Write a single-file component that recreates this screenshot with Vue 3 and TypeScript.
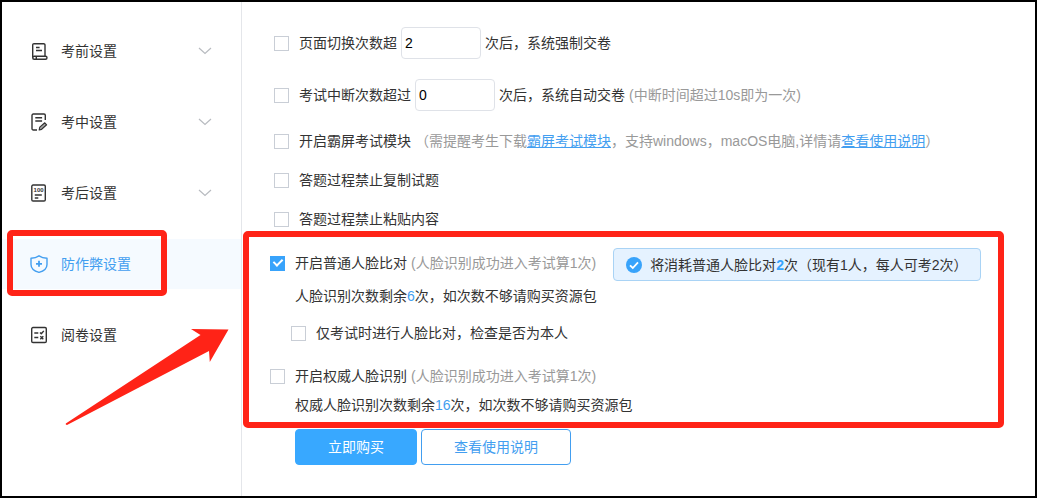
<script setup lang="ts">
import { ref } from 'vue'

interface NavItem {
  key: string
  label: string
  expandable: boolean
}

const navItems: NavItem[] = [
  { key: 'before', label: '考前设置', expandable: true },
  { key: 'during', label: '考中设置', expandable: true },
  { key: 'after', label: '考后设置', expandable: true },
  { key: 'cheat', label: '防作弊设置', expandable: false },
  { key: 'review', label: '阅卷设置', expandable: false },
]

const active = ref('cheat')

const limitSwitch = ref(false)
const switchCount = ref('2')
const limitBreak = ref(false)
const breakCount = ref('0')
const lockScreen = ref(false)
const noCopy = ref(false)
const noPaste = ref(false)
const faceCompare = ref(true)
const onlyInExam = ref(false)
const faceAuthority = ref(false)
</script>

<template>
  <div class="frame" lang="zh-CN">
    <aside class="sidebar">
      <nav class="nav">
        <button
          v-for="item in navItems"
          :key="item.key"
          type="button"
          class="nav-item"
          :class="{ active: item.key === active }"
          @click="active = item.key"
        >
          <svg v-if="item.key === 'before'" class="nav-icon" viewBox="0 0 18 18" aria-hidden="true">
            <path d="M2.700 15.500V3a1.300 1.300 0 0 1 1.300-1.300h9.700A1.300 1.300 0 0 1 15 3v11" />
            <rect x="2.700" y="14.300" width="14.300" height="3" rx="1.500" />
            <path d="M6.300 14.300v3M6 5.500h3.600M6 8.500h6" />
          </svg>
          <svg v-else-if="item.key === 'during'" class="nav-icon" viewBox="0 0 18 18" aria-hidden="true">
            <path d="M15.300 7V2.300A1.300 1.300 0 0 0 14 1H3.300A1.300 1.300 0 0 0 2 2.300v13.400A1.300 1.300 0 0 0 3.300 17H7" />
            <path d="M5.300 4.800h6.800M5.300 8h6.800" />
            <path class="thin" d="M9.200 17l.6-2.900 5-4.300 1.800 2-5 4.500z" />
          </svg>
          <svg v-else-if="item.key === 'after'" class="nav-icon" viewBox="0 0 18 18" aria-hidden="true">
            <rect x="1.800" y="1" width="13.500" height="16" rx="1.300" />
            <text x="8.600" y="8">100</text>
            <path d="M4.800 11h7M4.800 14h3.500" />
          </svg>
          <svg v-else-if="item.key === 'cheat'" class="nav-icon" viewBox="0 0 18 18" aria-hidden="true">
            <path d="M9 .8c2.400 1.600 5 2.300 8 2.400v6.200c0 3.800-3.300 6.600-8 7.900-4.700-1.300-8-4.100-8-7.900V3.200C4 3.100 6.600 2.400 9 .8z" />
            <path class="bold" d="M9 5.800v6M6 8.800h6" />
          </svg>
          <svg v-else class="nav-icon" viewBox="0 0 18 18" aria-hidden="true">
            <rect x="1.700" y="1.500" width="14.600" height="15" rx="1.300" />
            <path d="M4.300 7h4M4.300 11.500h4M10 6.400l1.300 1.400 2.500-2.900M10.300 10.200l3 3M13.300 10.200l-3 3" />
          </svg>
          <span class="nav-label">{{ item.label }}</span>
          <svg v-if="item.expandable" class="chevron" viewBox="0 0 14 8" aria-hidden="true">
            <path d="M1 1l6 5.500L13 1" />
          </svg>
          <span v-if="item.key === 'cheat'" class="nav-mark"></span>
        </button>
      </nav>
      <svg class="arrow" viewBox="0 0 164 98" aria-hidden="true">
        <path d="M163.500 1.500L126 1l9.500 6L.8 95.500v1L2 97 144 23l.8 11z" />
      </svg>
    </aside>

    <main class="content">
      <div class="limits">
        <div class="row">
          <input id="limit-switch" v-model="limitSwitch" class="check" type="checkbox" />
          <div class="inline">
            <label for="limit-switch">页面切换次数超</label>
            <input v-model="switchCount" class="number" type="text" aria-label="页面切换次数" />
            <span>次后，系统强制交卷</span>
          </div>
        </div>
        <div class="row">
          <input id="limit-break" v-model="limitBreak" class="check" type="checkbox" />
          <div class="inline">
            <label for="limit-break">考试中断次数超过</label>
            <input v-model="breakCount" class="number" type="text" aria-label="考试中断次数" />
            <span>次后，系统自动交卷</span>
            <span class="hint">(中断时间超过10s即为一次)</span>
          </div>
        </div>
      </div>

      <div class="toggles">
        <div class="row">
          <input id="lock-screen" v-model="lockScreen" class="check" type="checkbox" />
          <div class="inline">
            <label for="lock-screen">开启霸屏考试模块</label>
            <span class="hint">（需提醒考生下载<a href="#download">霸屏考试模块</a>，支持windows，macOS电脑,详情请<a href="#guide">查看使用说明</a>）</span>
          </div>
        </div>
        <div class="row">
          <input id="no-copy" v-model="noCopy" class="check" type="checkbox" />
          <label for="no-copy">答题过程禁止复制试题</label>
        </div>
        <div class="row">
          <input id="no-paste" v-model="noPaste" class="check" type="checkbox" />
          <label for="no-paste">答题过程禁止粘贴内容</label>
        </div>
      </div>

      <section class="face">
        <div class="face-head">
          <div class="row tall">
            <input id="face-compare" v-model="faceCompare" class="check" type="checkbox" />
            <div class="inline">
              <label for="face-compare">开启普通人脸比对</label>
              <span class="hint">(人脸识别成功进入考试算1次)</span>
            </div>
          </div>
          <div class="tip">
            <svg class="tip-icon" viewBox="0 0 16 16" aria-hidden="true">
              <circle cx="8" cy="8" r="8" />
              <path d="M4 8.300l2.800 2.700L12 5.400" />
            </svg>
            <span>将消耗普通人脸比对<b>2</b>次（现有1人，每人可考2次）</span>
          </div>
        </div>
        <p class="remain">人脸识别次数剩余<em>6</em>次，如次数不够请购买资源包</p>
        <div class="row nested">
          <input id="only-exam" v-model="onlyInExam" class="check" type="checkbox" />
          <label for="only-exam">仅考试时进行人脸比对，检查是否为本人</label>
        </div>
        <div class="row authority">
          <input id="face-authority" v-model="faceAuthority" class="check" type="checkbox" />
          <div class="inline">
            <label for="face-authority">开启权威人脸识别</label>
            <span class="hint">(人脸识别成功进入考试算1次)</span>
          </div>
        </div>
        <p class="remain last">权威人脸识别次数剩余<em>16</em>次，如次数不够请购买资源包</p>
      </section>

      <div class="actions">
        <button type="button" class="btn primary">立即购买</button>
        <button type="button" class="btn outline">查看使用说明</button>
      </div>
    </main>
  </div>
</template>

<style>
body {
  margin: 0;
}
</style>

<style scoped>
.frame {
  display: flex;
  box-sizing: border-box;
  min-height: 100vh;
  border: 2px solid #000;
  background: #fff;
  color: #333;
  font: 14px/20px "Liberation Sans", "Noto Sans CJK SC", sans-serif;
}

.frame button,
.frame input {
  font: inherit;
  color: inherit;
}

.sidebar {
  position: relative;
  flex: 0 0 240px;
  box-sizing: border-box;
  border-right: 1px solid #e4e6ea;
}

.nav {
  display: flex;
  flex-direction: column;
  gap: 21px;
  padding-top: 24px;
}

.nav-item {
  position: relative;
  display: flex;
  align-items: center;
  gap: 13px;
  height: 50px;
  padding: 0 29px 0 28px;
  border: 0;
  background: none;
  text-align: left;
  cursor: pointer;
}

.frame .nav-item.active {
  background: #f5faff;
  color: #429ef0;
}

.nav-icon {
  width: 18px;
  height: 18px;
  fill: none;
  stroke: currentColor;
  stroke-width: 1.4;
  stroke-linejoin: round;
}

.nav-icon text {
  fill: currentColor;
  stroke: none;
  font: bold 6px "Liberation Sans", sans-serif;
  text-anchor: middle;
}

.nav-icon .thin {
  stroke-width: 1.2;
  fill: #aaa;
}

.nav-icon .bold {
  stroke-width: 1.8;
}

.nav-label {
  flex: 1;
}

.chevron {
  width: 14px;
  height: 8px;
  fill: none;
  stroke: #b8bbc0;
  stroke-width: 1.2;
}

.nav-mark {
  position: absolute;
  top: -9px;
  bottom: -7px;
  left: 5px;
  width: 148px;
  border: 6px solid #ff2317;
  border-radius: 5px;
}

.arrow {
  position: absolute;
  top: 326px;
  left: 63px;
  width: 164px;
  height: 98px;
  fill: #ff2317;
}

.content {
  flex: 1;
  min-width: 0;
  padding: 25px 31px 0 1px;
}

.limits,
.toggles {
  display: flex;
  flex-direction: column;
  padding-left: 31px;
}

.limits {
  gap: 20px;
}

.toggles {
  gap: 19px;
  margin-top: 20px;
}

.row {
  display: flex;
  align-items: center;
  gap: 10px;
}

.inline {
  display: flex;
  align-items: center;
  gap: 4px;
}

.check {
  flex: none;
  appearance: none;
  box-sizing: border-box;
  width: 15px;
  height: 15px;
  margin: 0;
  border: 1px solid #c9ced6;
  background: #fff;
}

.check:checked {
  display: grid;
  place-items: center;
  border-color: #38a3fb;
  background: #38a3fb;
}

.check:checked::after {
  content: "";
  width: 4px;
  height: 7px;
  margin-bottom: 3px;
  border: solid #fff;
  border-width: 0 2px 2px 0;
  transform: rotate(45deg);
}

.frame .number {
  box-sizing: border-box;
  width: 80px;
  height: 32px;
  padding: 0 3px;
  border: 1px solid #dfe2e8;
  border-radius: 4px;
  background: #fff;
  color: #000;
}

.hint {
  color: #999;
}

.hint a {
  color: #429ef0;
  text-decoration: underline;
}

.face {
  margin-top: 2px;
  padding: 11px 17px 7px 21px;
  border: 6px solid #ff2317;
  border-radius: 5px;
}

.face-head {
  display: flex;
  align-items: flex-start;
  gap: 17px;
}

.tall {
  flex: none;
  height: 30px;
}

.tip {
  display: flex;
  flex: none;
  align-items: center;
  gap: 8px;
  box-sizing: border-box;
  height: 33px;
  padding: 0 12px;
  border: 1px solid #a9d3f5;
  border-radius: 4px;
  background: #e5f2ff;
  white-space: nowrap;
}

.tip b {
  color: #38a3fb;
}

.tip-icon {
  flex: none;
  width: 16px;
  height: 16px;
  fill: #38a3fb;
}

.tip-icon path {
  fill: none;
  stroke: #fff;
  stroke-width: 1.8;
}

.remain {
  margin: 5px 0 0 25px;
}

.remain em {
  color: #429ef0;
  font-style: normal;
}

.nested {
  margin: 17px 0 0 21px;
}

.authority {
  margin-top: 23px;
}

.last {
  margin-top: 9px;
}

.actions {
  display: flex;
  gap: 4px;
  margin-top: 1px;
  padding-left: 52px;
}

.btn {
  box-sizing: border-box;
  height: 36px;
  padding: 0 32px;
  border: 1px solid #429ef0;
  border-radius: 4px;
  cursor: pointer;
}

.frame .primary {
  border-color: #38a8ff;
  background: #38a8ff;
  color: #fff;
}

.frame .outline {
  background: #fff;
  color: #429ef0;
}
</style>
